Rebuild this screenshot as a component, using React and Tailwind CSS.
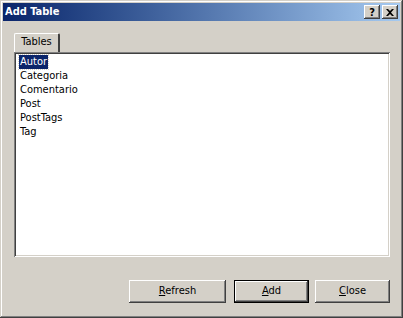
import React from "react";

const tables = ["Autor", "Categoria", "Comentario", "Post", "PostTags", "Tag"];

const raised =
  "shadow-[inset_-1px_-1px_#404040,inset_1px_1px_#ffffff,inset_-2px_-2px_#808080,inset_2px_2px_#d4d0c8]";

const Btn = ({ hot, rest, w, isDefault }) => (
  <div
    className={`h-[23px] ${w} flex items-center justify-center bg-[#d4d0c8] ${
      isDefault
        ? "border border-black shadow-[inset_-1px_-1px_#404040,inset_1px_1px_#ffffff,inset_-2px_-2px_#808080]"
        : raised
    }`}
  >
    <span>
      <span className="underline underline-offset-[1px]">{hot}</span>
      {rest}
    </span>
  </div>
);

export default function App() {
  return (
    <div
      className="w-[403px] h-[318px] bg-[#d4d0c8] p-[3px] flex flex-col text-[11px] text-black shadow-[inset_-1px_-1px_#404040,inset_1px_1px_#d4d0c8,inset_-2px_-2px_#808080,inset_2px_2px_#ffffff]"
      style={{ fontFamily: '"DejaVu Sans Condensed", "Liberation Sans", sans-serif' }}
    >
      {/* title bar */}
      <div className="h-[18px] bg-linear-to-r from-[#0a246a] to-[#a6caf0] flex items-center justify-between pl-[2px] pr-[2px]">
        <span className="text-white font-bold text-[11px]">Add Table</span>
        <div className="flex">
          <div className={`w-[16px] h-[14px] bg-[#d4d0c8] ${raised} flex items-center justify-center font-bold text-[11px] leading-none`}>
            ?
          </div>
          <div className={`ml-[2px] w-[16px] h-[14px] bg-[#d4d0c8] ${raised} flex items-center justify-center`}>
            <svg width="8" height="7" viewBox="0 0 8 7">
              <path d="M0 0h2l2 2 2-2h2L5 3.5 8 7H6L4 5 2 7H0l3-3.5z" fill="#000" />
            </svg>
          </div>
        </div>
      </div>

      {/* body */}
      <div className="flex-1 flex flex-col pl-[11px] pr-[10px] pt-[12px] pb-[12px]">
        <div className="flex">
          <div className="h-[19px] w-[46px] flex items-center justify-center border-t border-l border-white border-r-2 border-r-[#404040] rounded-tr-[2px] rounded-tl-[2px] pb-[1px]">
            Tables
          </div>
        </div>
        <div className="h-[205px] bg-white shadow-[inset_1px_1px_#808080,inset_-1px_-1px_#ffffff,inset_2px_2px_#404040,inset_-2px_-2px_#d4d0c8] pt-[3px] pl-[5px] flex flex-col">
          {tables.map((t, i) => (
            <div key={t} className="h-[14px] leading-[14px]">
              <span
                className={
                  i === 0
                    ? "inline-block bg-[#0a246a] text-white px-[1px] outline outline-1 outline-dotted outline-[#d4d0c8]"
                    : "px-[1px]"
                }
              >
                {t}
              </span>
            </div>
          ))}
        </div>
        <div className="flex-1" />
        <div className="flex justify-end">
          <Btn hot="R" rest="efresh" w="w-[97px]" />
          <div className="ml-[8px]">
            <Btn hot="A" rest="dd" w="w-[75px]" isDefault />
          </div>
          <div className="ml-[6px]">
            <Btn hot="C" rest="lose" w="w-[75px]" />
          </div>
        </div>
      </div>
    </div>
  );
}
